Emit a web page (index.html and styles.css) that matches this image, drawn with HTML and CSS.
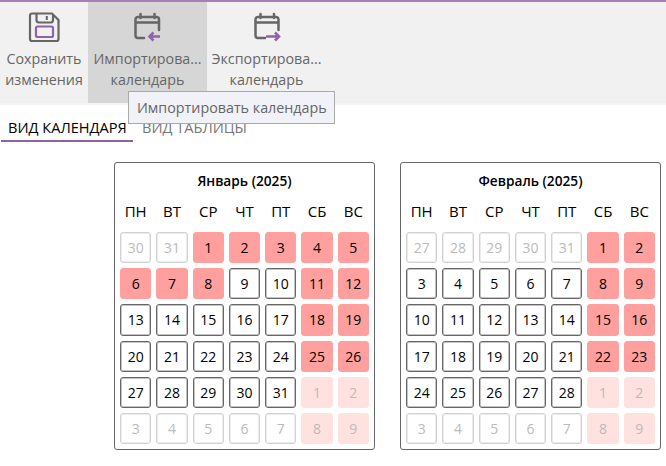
FILE: index.html
```html
<!DOCTYPE html>
<html lang="ru">
<head>
<meta charset="utf-8">
<title>Календарь</title>
<link rel="stylesheet" href="styles.css">
</head>
<body>
<div class="toolbar">
  <div class="tool tool-save">
    <svg class="icon" width="34" height="34" viewBox="0 0 34 34" fill="none">
      <path d="M5 3.500H25L31.500 10V29a2 2 0 0 1-2 2H5a2 2 0 0 1-2-2V5.500a2 2 0 0 1 2-2Z" stroke="#666" stroke-width="2.200"/>
      <path d="M9.500 3.500V10a2.500 2.500 0 0 0 2.500 2.500H24a2.500 2.500 0 0 0 2-2.500V5" stroke="#666" stroke-width="2.200"/>
      <path d="M19.800 6v4" stroke="#666" stroke-width="2"/>
      <rect x="9" y="16.500" width="17" height="10.500" rx="1.500" stroke="#8f63a6" stroke-width="2.200"/>
    </svg>
    <div class="label">Сохранить<br>изменения</div>
  </div>
  <div class="tool tool-active">
    <svg class="icon" width="34" height="34" viewBox="0 0 34 34" fill="none">
      <path d="M13 28H7A2.500 2.500 0 0 1 4.500 25.500V9.500A2.500 2.500 0 0 1 7 7H25.500A2.500 2.500 0 0 1 28 9.500V20M4.500 12.500H28M9.500 4V8M23.500 4V8" stroke="#666" stroke-width="2.500" stroke-linecap="round"/>
      <path d="M29 26.500H18.500M22.500 22.500L18.500 26.500L22.500 30.500" stroke="#8f63a6" stroke-width="2.600"/>
    </svg>
    <div class="label">Импортирова...<br>календарь</div>
  </div>
  <div class="tool">
    <svg class="icon" width="34" height="34" viewBox="0 0 34 34" fill="none">
      <path d="M15 28H8A2.500 2.500 0 0 1 5.500 25.500V9.500A2.500 2.500 0 0 1 8 7H26A2.500 2.500 0 0 1 28.500 9.500V20M5.500 12.500H28.500M10.500 4V8M24 4V8" stroke="#666" stroke-width="2.500" stroke-linecap="round"/>
      <path d="M16 26.500H29M25 22.500L29 26.500L25 30.500" stroke="#8f63a6" stroke-width="2.600"/>
    </svg>
    <div class="label">Экспортирова...<br>календарь</div>
  </div>
</div>
<div class="tooltip">Импортировать календарь</div>
<div class="tabs">
  <div class="tab tab-active">ВИД КАЛЕНДАРЯ</div>
  <div class="tab">ВИД ТАБЛИЦЫ</div>
</div>
<div class="calendars">
  <section class="month">
    <h2 class="month-title">Январь (2025)</h2>
    <div class="week"><span>ПН</span><span>ВТ</span><span>СР</span><span>ЧТ</span><span>ПТ</span><span>СБ</span><span>ВС</span></div>
    <div class="days">
      <div class="day other">30</div><div class="day other">31</div><div class="day off">1</div><div class="day off">2</div><div class="day off">3</div><div class="day off">4</div><div class="day off">5</div>
      <div class="day off">6</div><div class="day off">7</div><div class="day off">8</div><div class="day">9</div><div class="day">10</div><div class="day off">11</div><div class="day off">12</div>
      <div class="day">13</div><div class="day">14</div><div class="day">15</div><div class="day">16</div><div class="day">17</div><div class="day off">18</div><div class="day off">19</div>
      <div class="day">20</div><div class="day">21</div><div class="day">22</div><div class="day">23</div><div class="day">24</div><div class="day off">25</div><div class="day off">26</div>
      <div class="day">27</div><div class="day">28</div><div class="day">29</div><div class="day">30</div><div class="day">31</div><div class="day other-off">1</div><div class="day other-off">2</div>
      <div class="day other">3</div><div class="day other">4</div><div class="day other">5</div><div class="day other">6</div><div class="day other">7</div><div class="day other-off">8</div><div class="day other-off">9</div>
    </div>
  </section>
  <section class="month">
    <h2 class="month-title">Февраль (2025)</h2>
    <div class="week"><span>ПН</span><span>ВТ</span><span>СР</span><span>ЧТ</span><span>ПТ</span><span>СБ</span><span>ВС</span></div>
    <div class="days">
      <div class="day other">27</div><div class="day other">28</div><div class="day other">29</div><div class="day other">30</div><div class="day other">31</div><div class="day off">1</div><div class="day off">2</div>
      <div class="day">3</div><div class="day">4</div><div class="day">5</div><div class="day">6</div><div class="day">7</div><div class="day off">8</div><div class="day off">9</div>
      <div class="day">10</div><div class="day">11</div><div class="day">12</div><div class="day">13</div><div class="day">14</div><div class="day off">15</div><div class="day off">16</div>
      <div class="day">17</div><div class="day">18</div><div class="day">19</div><div class="day">20</div><div class="day">21</div><div class="day off">22</div><div class="day off">23</div>
      <div class="day">24</div><div class="day">25</div><div class="day">26</div><div class="day">27</div><div class="day">28</div><div class="day other-off">1</div><div class="day other-off">2</div>
      <div class="day other">3</div><div class="day other">4</div><div class="day other">5</div><div class="day other">6</div><div class="day other">7</div><div class="day other-off">8</div><div class="day other-off">9</div>
    </div>
  </section>
</div>
</body>
</html>
```
FILE: styles.css
```css
* { box-sizing: border-box; }
html, body { margin: 0; padding: 0; background: #fff; }
body {
  width: 666px;
  height: 466px;
  overflow: hidden;
  position: relative;
  font-family: "Open Sans", "Noto Sans", sans-serif;
  font-size: 14px;
}
.toolbar {
  display: flex;
  height: 105px;
  border-top: 2px solid #a67fb5;
  border-bottom: 2px solid #f4f4f4;
  background: #f1f1f1;
}
.tool {
  width: 119px;
  display: flex;
  flex-direction: column;
  align-items: center;
  padding-top: 8px;
  color: #666;
}
.tool-save { width: 88px; }
.tool-active { background: #d6d6d6; }
.icon { display: block; }
.label {
  margin-top: 4px;
  font-size: 14.300px;
  line-height: 21px;
  text-align: center;
  white-space: nowrap;
}
.tooltip {
  position: absolute;
  left: 128px;
  top: 91px;
  width: 207px;
  height: 33px;
  line-height: 31px;
  padding-left: 8px;
  background: #f1f2f8;
  border: 1px solid #a9a9a9;
  color: #666;
  font-size: 14.300px;
  white-space: nowrap;
}
.tabs {
  display: flex;
  height: 37px;
  padding-left: 1px;
}
.tab {
  height: 37px;
  padding: 11px 7px 0 7px;
  margin-right: 2px;
  font-size: 14.600px;
  line-height: 22px;
  color: #777;
  white-space: nowrap;
}
.tab-active {
  width: 132px;
  color: #000;
  border-bottom: 2px solid #8f63a6;
}
.calendars {
  display: flex;
  justify-content: flex-end;
  gap: 25px;
  padding: 20px 5px 0 0;
}
.month {
  width: 261px;
  height: 288px;
  padding: 0 5px;
  border: 1px solid #666;
  border-radius: 3px;
}
.month-title {
  margin: 0;
  padding-top: 8px;
  height: 31px;
  font-size: 13.700px;
  line-height: 20px;
  font-weight: 600;
  text-align: center;
  color: #000;
}
.week {
  display: grid;
  grid-template-columns: repeat(7, 1fr);
  gap: 5px;
  height: 38px;
  padding-top: 5px;
  line-height: 24px;
  font-size: 15px;
  text-align: center;
  color: #000;
}
.days {
  display: grid;
  grid-template-columns: repeat(7, 1fr);
  grid-auto-rows: 31.200px;
  gap: 5px;
}
.day {
  display: flex;
  align-items: center;
  justify-content: center;
  border: 1px solid #666;
  border-radius: 3px;
  box-shadow: inset 0 0 0 1px #c4c4c4;
  font-size: 14px;
  color: #000;
}
.off { background: #ffa09e; border-color: #ffa09e; box-shadow: none; }
.other { border-color: #d2d2d2; box-shadow: inset 0 0 0 1px #ececec; color: #bbb; }
.other-off { background: #ffe1e0; border-color: #ffe1e0; box-shadow: none; color: #bbb; }
```
